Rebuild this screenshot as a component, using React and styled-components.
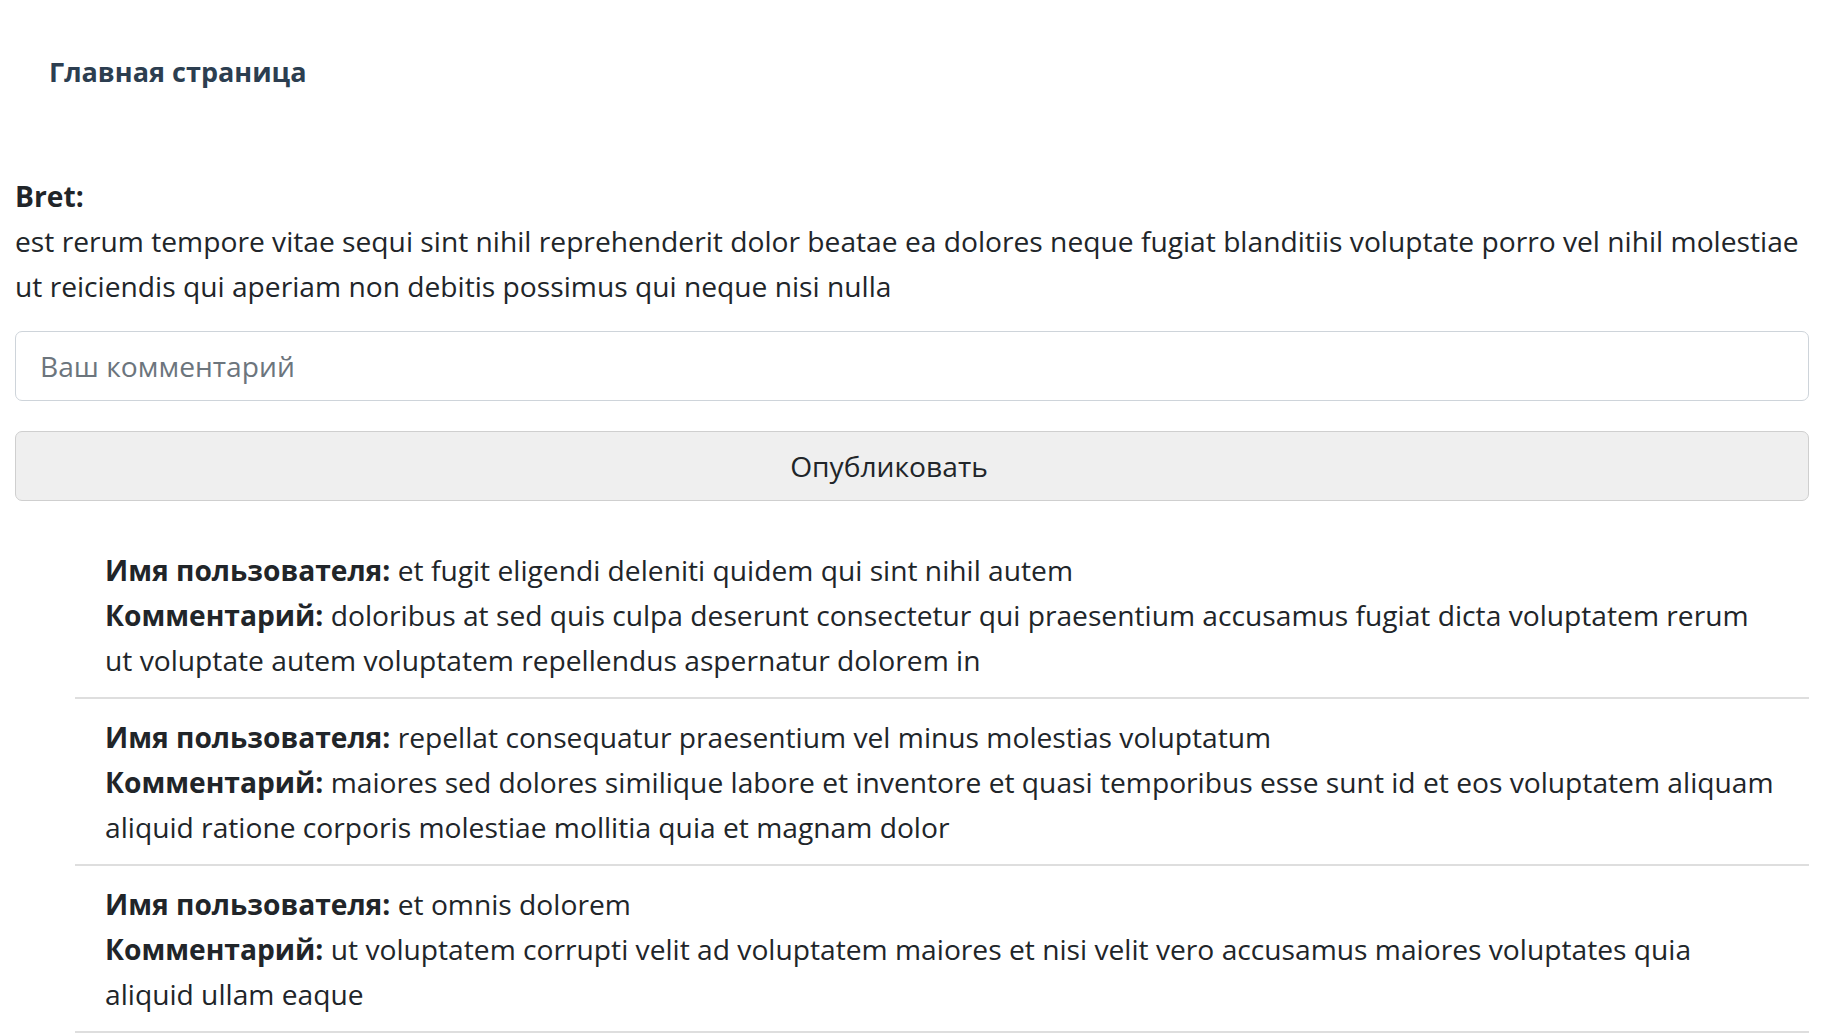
import React from 'react';
import styled, { createGlobalStyle } from 'styled-components';

const GlobalStyle = createGlobalStyle`
	html, body {
		margin: 0;
		padding: 0;
		background: #fff;
	}
	body {
		font-family: "Open Sans", "Noto Sans", sans-serif;
		font-size: 28.2px;
		line-height: 45px;
		color: #212529;
	}
	* {
		box-sizing: border-box;
	}
`;

const Page = styled.div`
	padding: 0 22px 0 15px;
`;

const Nav = styled.nav`
	padding: 49px 34px 80px;
`;

const NavLink = styled.a`
	font-weight: 700;
	color: #2c3e50;
	text-decoration: none;
	font-size: 27px;
`;

const Post = styled.section`
	display: flex;
	flex-direction: column;
`;

const Author = styled.div`
	font-weight: 700;
`;

const Body = styled.p`
	margin: 0;
`;

const Input = styled.input`
	margin-top: 22px;
	height: 70px;
	width: 100%;
	padding: 0 24px;
	border: 1px solid #ced4da;
	border-radius: 7px;
	font: inherit;
	color: #212529;
	&::placeholder {
		color: #6c757d;
	}
`;

const Button = styled.button`
	margin-top: 30px;
	height: 70px;
	width: 100%;
	padding: 0 46px 0 0;
	border: 1px solid #cfcfcf;
	border-radius: 7px;
	background: #efefef;
	font: inherit;
	color: #212529;
`;

const List = styled.ul`
	list-style: none;
	margin: 31px 0 0;
	padding: 0 0 0 60px;
`;

const Item = styled.li`
	padding: 16px 30px 14px 30px;
	border-bottom: 2px solid #dedede;
`;

const Label = styled.b`
	font-weight: 700;
`;

const comments = [
	{
		name: 'et fugit eligendi deleniti quidem qui sint nihil autem',
		body: 'doloribus at sed quis culpa deserunt consectetur qui praesentium accusamus fugiat dicta voluptatem rerum ut voluptate autem voluptatem repellendus aspernatur dolorem in',
	},
	{
		name: 'repellat consequatur praesentium vel minus molestias voluptatum',
		body: 'maiores sed dolores similique labore et inventore et quasi temporibus esse sunt id et eos voluptatem aliquam aliquid ratione corporis molestiae mollitia quia et magnam dolor',
	},
	{
		name: 'et omnis dolorem',
		body: 'ut voluptatem corrupti velit ad voluptatem maiores et nisi velit vero accusamus maiores voluptates quia aliquid ullam eaque',
	},
];

const App = () => {
	return (
		<>
			<GlobalStyle />
			<Page>
				<Nav>
					<NavLink href="#">Главная страница</NavLink>
				</Nav>
				<Post>
					<Author>Bret:</Author>
					<Body>
						est rerum tempore vitae sequi sint nihil reprehenderit dolor beatae ea dolores neque fugiat blanditiis voluptate porro vel nihil molestiae ut reiciendis qui aperiam non debitis possimus qui neque nisi nulla
					</Body>
					<Input placeholder="Ваш комментарий" />
					<Button>Опубликовать</Button>
				</Post>
				<List>
					{comments.map((c, i) => (
						<Item key={i}>
							<div>
								<Label>Имя пользователя:</Label> {c.name}
							</div>
							<div>
								<Label>Комментарий:</Label> {c.body}
							</div>
						</Item>
					))}
				</List>
			</Page>
		</>
	);
};

export default App;
